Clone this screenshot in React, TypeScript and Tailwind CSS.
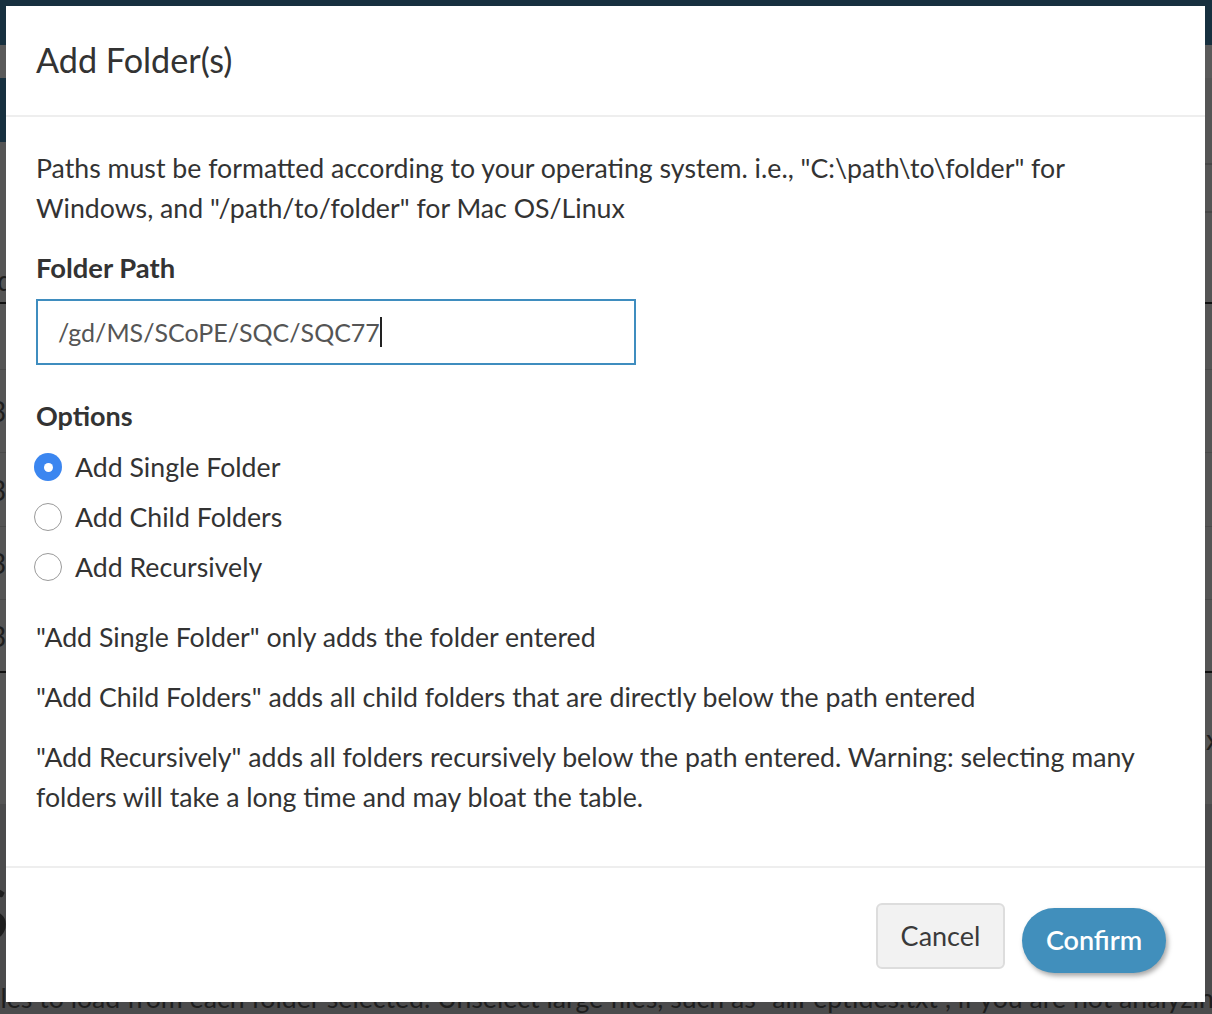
import React from "react";

function Radio({ checked }: { checked?: boolean }) {
  if (checked) {
    return (
      <span className="flex h-[28px] w-[28px] shrink-0 items-center justify-center rounded-full bg-[#3b86f0]">
        <span className="h-[9px] w-[9px] rounded-full bg-white" />
      </span>
    );
  }
  return <span className="h-[28px] w-[28px] shrink-0 rounded-full border-[1.5px] border-[#9a9a9a] bg-white" />;
}

export default function App() {
  const font = { fontFamily: "Lato, 'Noto Sans', sans-serif" };
  return (
    <div className="relative h-[1014px] w-[1212px] overflow-hidden bg-[#555555]" style={font}>
      {/* dimmed page behind the modal */}
      <div className="flex h-full flex-col text-[28px] text-[#1e1e1e]">
        <div className="h-[45px] shrink-0 bg-[#17303f]" />
        <div className="h-[33px] shrink-0 bg-[#5a5a5a]" />
        <div className="flex h-[64px] shrink-0">
          <div className="flex w-[300px] items-center justify-end bg-[#17303f] pr-[4px] text-[#6b7a83]">Add</div>
          <div className="flex-1 bg-[#555555]" />
        </div>
        <div className="flex h-[162px] shrink-0 items-start justify-between border-b-2 border-[#111]">
          <div className="flex h-full items-end pb-[8px]">
            <span className="-ml-[40px] leading-none">Fold</span>
          </div>
          <div className="mt-[21px] h-[50px] w-[40px] border-y-2 border-[#474747]" />
        </div>
        <div className="flex h-[66px] shrink-0 items-center border-b border-[#4a4a4a] pl-[0px]">
          <span className="-ml-[8px]">|</span>
        </div>
        <div className="flex h-[83px] shrink-0 items-center border-b border-[#4a4a4a]">
          <span className="-ml-[10px]">3</span>
        </div>
        <div className="flex h-[74px] shrink-0 items-center border-b border-[#4a4a4a]">
          <span className="-ml-[10px]">3</span>
        </div>
        <div className="flex h-[73px] shrink-0 items-center border-b border-[#4a4a4a]">
          <span className="-ml-[10px]">3</span>
        </div>
        <div className="flex h-[73px] shrink-0 items-center border-b-2 border-[#111]">
          <span className="-ml-[10px]">3</span>
        </div>
        <div className="flex h-[131px] shrink-0 items-center justify-end bg-[#555555]">
          <span className="-mr-[8px]">x</span>
        </div>
        <div className="flex flex-1 flex-col bg-[#4b4b4c]">
          <div className="mt-[72px] h-[72px] shrink-0 text-[72px] leading-[72px]">
            <span className="-ml-[30px]">S</span>
          </div>
          <div className="mt-[30px] whitespace-nowrap text-[26.7px] leading-[40px]">
            <span className="-ml-[6px]">
              iles to load from each folder selected. Unselect large files, such as "allPeptides.txt", if you are not analyzing
            </span>
          </div>
        </div>
      </div>

      {/* modal */}
      <div className="absolute left-[6px] top-[6px] flex h-[996px] w-[1199px] flex-col bg-white text-[#333333]">
        <div className="flex h-[111px] shrink-0 items-center border-b-2 border-[#eeeeee] px-[30px]">
          <h4 className="text-[34.2px] leading-none">Add Folder(s)</h4>
        </div>
        <div className="flex flex-col px-[30px] pb-[29px] pt-[31px] text-[26.7px] leading-[40px]">
          <p className="mb-[20px]">
            Paths must be formatted according to your operating system. i.e., "C:\path\to\folder" for Windows, and "/path/to/folder" for Mac OS/Linux
          </p>
          <label className="mb-[11px] text-[27.4px] font-bold">Folder Path</label>
          <div className="flex h-[66px] w-[600px] items-center border-2 border-[#3f8dbf] px-[20px] text-[25px] text-[#555555]">
            <span>/gd/MS/SCoPE/SQC/SQC77</span>
            <span className="h-[30px] w-[2px] bg-[#222]" />
          </div>
          <label className="mb-[11px] mt-[31px] text-[27px] font-bold">Options</label>
          <div className="flex flex-col gap-[10px]">
            <div className="flex h-[40px] items-center gap-[13px] -ml-[2px]">
              <Radio checked />
              <span>Add Single Folder</span>
            </div>
            <div className="flex h-[40px] items-center gap-[13px] -ml-[2px]">
              <Radio />
              <span>Add Child Folders</span>
            </div>
            <div className="flex h-[40px] items-center gap-[13px] -ml-[2px]">
              <Radio />
              <span>Add Recursively</span>
            </div>
          </div>
          <p className="mt-[30px]">"Add Single Folder" only adds the folder entered</p>
          <p className="mt-[20px]">"Add Child Folders" adds all child folders that are directly below the path entered</p>
          <p className="mb-[20px] mt-[20px]">
            "Add Recursively" adds all folders recursively below the path entered. Warning: selecting many folders will take a long time and may bloat the table.
          </p>
        </div>
        <div className="flex flex-1 items-start justify-end gap-[17px] border-t-2 border-[#eeeeee] pr-[39px] pt-[35px]">
          <button className="flex h-[66px] w-[129px] items-center justify-center rounded-[6px] border-2 border-[#dddddd] bg-[#f2f2f2] text-[27px] text-[#3a3a3a]">
            Cancel
          </button>
          <button className="mt-[5px] flex h-[65px] w-[144px] items-center justify-center rounded-full bg-[#418fbc] text-[27px] font-semibold text-white shadow-[2px_3px_5px_rgba(0,0,0,0.35)]">
            Confirm
          </button>
        </div>
      </div>
    </div>
  );
}
